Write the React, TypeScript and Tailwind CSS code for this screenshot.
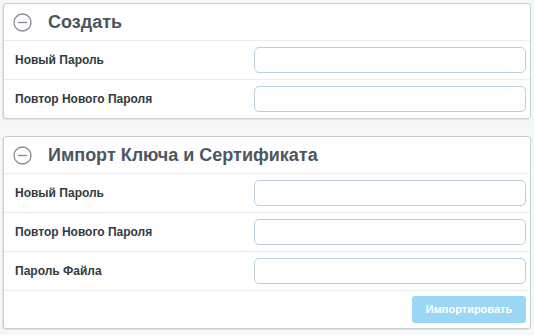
import React from "react";

function MinusIcon() {
  return (
    <svg width="19" height="19" viewBox="0 0 19 19" className="shrink-0">
      <circle cx="9.5" cy="9.5" r="8.5" fill="none" stroke="#858a90" strokeWidth="1.3" />
      <line x1="5" y1="9.5" x2="14" y2="9.5" stroke="#858a90" strokeWidth="1.3" />
    </svg>
  );
}

function Row({ label }: { label: string }) {
  return (
    <div className="flex items-center h-[39px] border-t border-[#ebedef] pl-[11px] pr-[4px]">
      <div className="flex-1 text-[12px] font-bold text-[#333a40]">{label}</div>
      <input
        type="password"
        className="w-[272px] h-[26px] rounded-[5px] border border-[#bccfdc] bg-white outline-none"
      />
    </div>
  );
}

function Header({ title }: { title: string }) {
  return (
    <div className="flex items-center h-[36px] pl-[9px]">
      <MinusIcon />
      <div className="ml-[16px] text-[18px] font-bold text-[#4b5661]">{title}</div>
    </div>
  );
}

export default function App() {
  return (
    <div
      className="w-[534px] h-[335px] bg-[#f6f7f9] pt-[3px] pl-[3px] pr-[3px] flex flex-col gap-[17px]"
      style={{ fontFamily: '"Liberation Sans", Arial, sans-serif' }}
    >
      <div className="bg-white border border-[#c9ced3] rounded-[3px] shadow-[-1px_1px_1px_rgba(0,0,0,0.08)]">
        <Header title="Создать" />
        <Row label="Новый Пароль" />
        <Row label="Повтор Нового Пароля" />
      </div>
      <div className="bg-white border border-[#c9ced3] rounded-[3px] shadow-[-1px_1px_1px_rgba(0,0,0,0.08)]">
        <Header title="Импорт Ключа и Сертификата" />
        <Row label="Новый Пароль" />
        <Row label="Повтор Нового Пароля" />
        <Row label="Пароль Файла" />
        <div className="flex justify-end items-center h-[38px] border-t border-[#ebedef] pr-[4px]">
          <button className="w-[114px] h-[27px] rounded-[3px] bg-[#9bd7f4] text-white text-[11px] font-bold">
            Импортировать
          </button>
        </div>
      </div>
    </div>
  );
}
